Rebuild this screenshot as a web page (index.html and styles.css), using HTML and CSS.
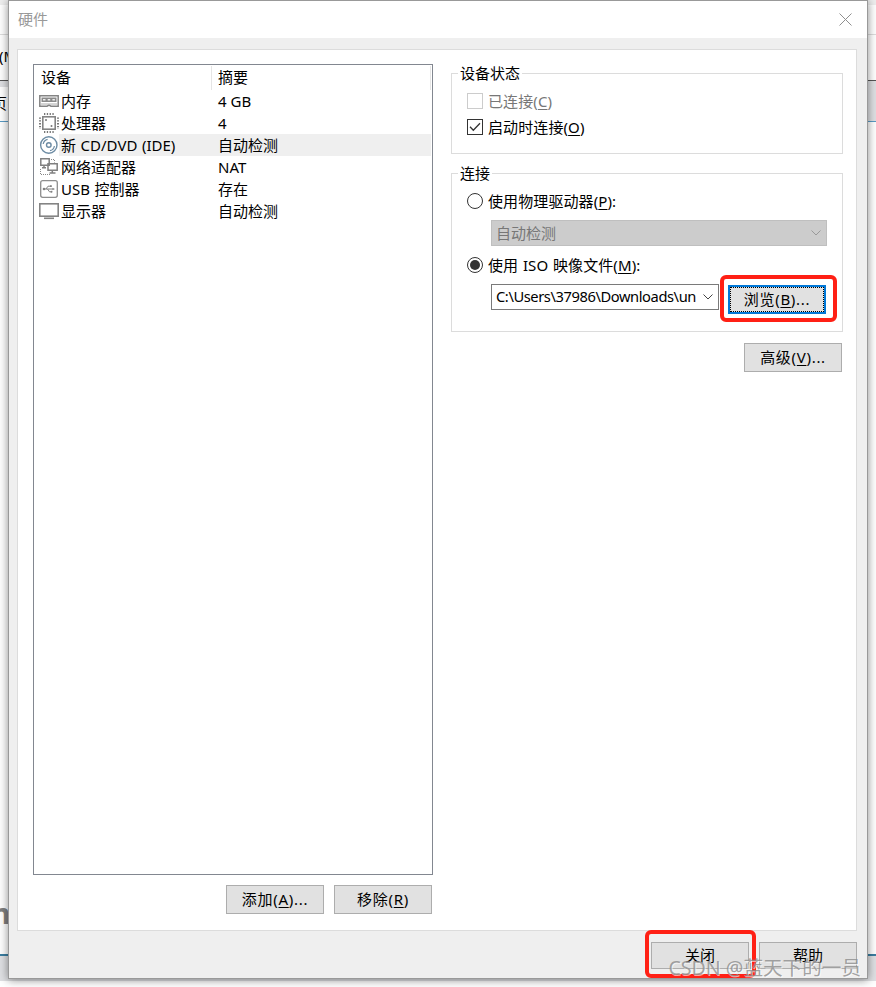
FILE: index.html
```html
<!DOCTYPE html>
<html lang="zh-CN">

<head>
  <meta charset="UTF-8">
  <meta name="viewport" content="width=device-width, initial-scale=1.0">
  <title>硬件</title>
  <link rel="stylesheet" href="styles.css">
</head>

<body>
  <!-- parent window behind the dialog -->
  <div class="parent-window">
    <div class="parent-title"></div>
    <div class="parent-menu">(M)</div>
    <div class="parent-tabs"><span class="parent-tab">页</span></div>
    <div class="parent-content"><span class="parent-logo">m</span></div>
    <div class="parent-status"></div>
  </div>

  <div class="dialog">
    <div class="titlebar">
      <span class="title">硬件</span>
      <svg class="close-icon" width="13" height="13" viewBox="0 0 13 13">
        <path d="M0.5 0.5 L12.5 12.5 M12.5 0.5 L0.5 12.5" stroke="#8f8f8f" fill="none"/>
      </svg>
    </div>

    <div class="panel">
      <div class="left">
        <div class="device-list">
          <div class="list-header">
            <div class="col-device">设备</div>
            <div class="col-summary">摘要</div>
          </div>
          <div class="device">
            <svg class="icon" width="20" height="22" viewBox="0 0 20 22">
              <path d="M0.8 5.8 H19.2 V16.2 H12 L10 15 L8 16.2 H0.8 Z" fill="#fff" stroke="#848484" stroke-width="1.5"/>
              <path d="M2.5 7.5 H17.5 V12 H2.5 Z" fill="#8a8a8a"/>
              <path d="M4 9 H6.5 V10.5 H4 Z M8.7 9 H11.2 V10.5 H8.7 Z M13.4 9 H15.9 V10.5 H13.4 Z" fill="#eee"/>
              <path d="M2 14 H18" stroke="#aaa"/>
            </svg>
            <span class="device-name">内存</span>
            <span class="device-value">4 GB</span>
          </div>
          <div class="device">
            <svg class="icon" width="20" height="22" viewBox="0 0 20 22">
              <path d="M5 2 H16 M5 20 H16" stroke="#777" stroke-width="2" stroke-dasharray="1.3 1.5" fill="none"/>
              <path d="M1 5.5 V17 M19 5.5 V17" stroke="#777" stroke-width="2" stroke-dasharray="1.3 1.5" fill="none"/>
              <rect x="3.8" y="4.8" width="12.4" height="12.4" fill="#fff" stroke="#848484" stroke-width="1.6"/>
              <circle cx="7" cy="8" r="1" fill="#777"/>
              <circle cx="12.5" cy="14" r="1" fill="#777"/>
            </svg>
            <span class="device-name">处理器</span>
            <span class="device-value">4</span>
          </div>
          <div class="device selected">
            <svg class="icon" width="20" height="22" viewBox="0 0 20 22">
              <circle cx="9.8" cy="11" r="8.2" fill="#fff" stroke="#6c8ba3" stroke-width="1.4"/>
              <circle cx="9.8" cy="11" r="2.3" fill="none" stroke="#6c8ba3" stroke-width="1.4"/>
              <path d="M4.2 10 A5.8 5.8 0 0 1 8.6 5.3 M15.4 12 A5.8 5.8 0 0 1 11 16.7" fill="none" stroke="#6c8ba3" stroke-width="1.2"/>
            </svg>
            <span class="device-name">新 CD/DVD (IDE)</span>
            <span class="device-value">自动检测</span>
          </div>
          <div class="device">
            <svg class="icon" width="20" height="22" viewBox="0 0 20 22">
              <path d="M1.8 2.8 H10.2 V9.2 H1.8 Z M9 7.8 H18.2 V14.2 H9 Z" fill="#fff" stroke="#808080" stroke-width="1.5"/>
              <path d="M3 11.8 H7 M5 9 V12 M10.5 17 H16.5 M13.3 14 V17" fill="none" stroke="#808080" stroke-width="1.5"/>
              <path d="M12 3.5 H15.5 V6.5 M1.5 13 V18.5 H11" fill="none" stroke="#888" stroke-dasharray="1 1"/>
            </svg>
            <span class="device-name">网络适配器</span>
            <span class="device-value">NAT</span>
          </div>
          <div class="device">
            <svg class="icon" width="20" height="22" viewBox="0 0 20 22">
              <rect x="1.7" y="2.7" width="16.6" height="16.6" rx="2" fill="#fff" stroke="#8d8d8d" stroke-width="1.3"/>
              <path d="M5 11 H14 M7 11 L9 8.2 H11.5 M8.5 11 L10.5 13.8 H12.5" fill="none" stroke="#808080" stroke-width="1"/>
              <circle cx="5" cy="11" r="1.3" fill="#808080"/>
              <path d="M13.5 9.7 L16 11 L13.5 12.3 Z M11 7.3 H12.8 V9.1 H11 Z" fill="#808080"/>
              <circle cx="12.5" cy="13.8" r="1" fill="#808080"/>
            </svg>
            <span class="device-name">USB 控制器</span>
            <span class="device-value">存在</span>
          </div>
          <div class="device">
            <svg class="icon" width="20" height="22" viewBox="0 0 20 22">
              <rect x="0.8" y="3.8" width="18.4" height="12.4" fill="#fff" stroke="#848484" stroke-width="1.6"/>
              <path d="M5 18.3 H15" stroke="#848484" stroke-width="1.6"/>
            </svg>
            <span class="device-name">显示器</span>
            <span class="device-value">自动检测</span>
          </div>
        </div>
        <div class="list-buttons">
          <button type="button">添加(<u>A</u>)...</button>
          <button type="button">移除(<u>R</u>)</button>
        </div>
      </div>

      <div class="right">
        <div class="group status-group">
          <div class="group-title">设备状态</div>
          <label class="option disabled">
            <span class="checkbox"></span>
            <span class="option-text">已连接(<u>C</u>)</span>
          </label>
          <label class="option">
            <span class="checkbox">
              <svg width="14" height="14" viewBox="0 0 14 14"><path d="M2 6.8 L5.3 10.2 L12 3.2" fill="none" stroke="#333" stroke-width="1.3"/></svg>
            </span>
            <span class="option-text">启动时连接(<u>O</u>)</span>
          </label>
        </div>

        <div class="group connect-group">
          <div class="group-title">连接</div>
          <label class="option">
            <span class="radio"></span>
            <span class="option-text">使用物理驱动器(<u>P</u>):</span>
          </label>
          <div class="combo combo-disabled">
            <span>自动检测</span>
            <svg width="10" height="6" viewBox="0 0 10 6"><path d="M0.5 0.5 L5 5 L9.5 0.5" fill="none" stroke="#999"/></svg>
          </div>
          <label class="option">
            <span class="radio checked"></span>
            <span class="option-text">使用 ISO 映像文件(<u>M</u>):</span>
          </label>
          <div class="file-row">
            <div class="combo combo-file">
              <span class="file-path">C:\Users\37986\Downloads\un</span>
              <svg width="10" height="6" viewBox="0 0 10 6"><path d="M0.5 0.5 L5 5 L9.5 0.5" fill="none" stroke="#444"/></svg>
            </div>
            <div class="mark mark-browse">
              <button type="button" class="focused">浏览(<u>B</u>)...</button>
            </div>
          </div>
        </div>

        <button type="button" class="advanced">高级(<u>V</u>)...</button>
      </div>
    </div>

    <div class="footer">
      <div class="mark mark-close"><button type="button">关闭</button></div>
      <button type="button">帮助</button>
    </div>
  </div>

  <div class="watermark">CSDN @蓝天下的一员</div>
</body>

</html>
```
FILE: styles.css
```css
* {
  box-sizing: border-box;
}

body {
  margin: 0;
  height: 987px;
  overflow: hidden;
  position: relative;
  background: #fff;
  font-family: "Noto Sans", "Noto Sans CJK SC", sans-serif;
  font-size: 15px;
  line-height: 22px;
  color: #000;
}

u {
  text-decoration-thickness: 1px;
  text-underline-offset: 2px;
}

/* parent window */
.parent-window {
  height: 981px;
  display: flex;
  flex-direction: column;
  background: #fff;
}

.parent-title {
  height: 35px;
  border-top: 5px solid #eee;
  border-bottom: 1px solid #ddd;
}

.parent-menu {
  height: 46px;
  line-height: 42px;
  text-indent: -1px;
  border-bottom: 1px solid #555;
}

.parent-tabs {
  height: 41px;
  padding-top: 6px;
  background: #dfe0e3;
  border-bottom: 1px solid #5a9bc4;
}

.parent-tab {
  display: block;
  width: 20px;
  height: 34px;
  line-height: 32px;
  background: #fff;
  text-indent: -8px;
}

.parent-content {
  flex: 1;
  display: flex;
  align-items: flex-end;
  padding-bottom: 22px;
}

.parent-logo {
  font-size: 29px;
  line-height: 38px;
  font-weight: bold;
  color: #808080;
  margin-left: -18px;
}

.parent-status {
  height: 27px;
  background: #dfe0e3;
  border-top: 2px solid #3b7ea1;
}

/* dialog */
.dialog {
  position: absolute;
  left: 8px;
  top: 0;
  width: 860px;
  height: 979px;
  display: flex;
  flex-direction: column;
  background: #efefef;
  border: 1px solid #999;
  box-shadow: 0 1px 9px rgba(0, 0, 0, 0.45);
}

.titlebar {
  height: 37px;
  padding: 0 15px 0 9px;
  display: flex;
  align-items: center;
  justify-content: space-between;
  background: #fff;
  color: #999;
}

.title {
  padding-bottom: 2px;
}

.panel {
  height: 882px;
  margin: 11px 10px 0 8px;
  padding: 14px 13px 0 15px;
  display: flex;
  gap: 18px;
  background: #fff;
  border: 1px solid #dcdcdc;
}

.left {
  width: 400px;
}

.device-list {
  height: 811px;
  padding: 1px;
  border: 1px solid #828790;
}

.list-header {
  height: 24px;
  display: flex;
  line-height: 23px;
  border-right: 1px solid #e5e5e5;
}

.col-device {
  width: 177px;
  padding-left: 6px;
  border-right: 1px solid #e5e5e5;
}

.col-summary {
  padding-left: 6px;
}

.device {
  height: 22px;
  display: flex;
  padding-left: 4px;
}

.device-name {
  width: 153px;
  padding-left: 2px;
  word-spacing: 0.7px;
}

.device-value {
  flex: 1;
  padding-left: 6px;
}

.selected .device-name,
.selected .device-value {
  background: #efefef;
}

.list-buttons {
  display: flex;
  justify-content: flex-end;
  gap: 10px;
  margin-top: 10px;
  padding-right: 1px;
}

button {
  width: 98px;
  height: 29px;
  padding: 0 0 2px;
  font: inherit;
  letter-spacing: 0.7px;
  color: #000;
  background: #e1e1e1;
  border: 1px solid #adadad;
  border-radius: 0;
}

.right {
  flex: 1;
  display: flex;
  flex-direction: column;
}

.group {
  border: 1px solid #dcdcdc;
  padding-left: 15px;
}

.group-title {
  width: fit-content;
  height: 22px;
  margin: -12px 0 0 -9px;
  padding: 0 2px;
  background: #fff;
}

.status-group {
  height: 81px;
  margin-top: 9px;
}

.connect-group {
  height: 159px;
  margin-top: 19px;
}

.option {
  height: 26px;
  display: flex;
  align-items: center;
  white-space: nowrap;
}

.option-text {
  letter-spacing: 0.1px;
  word-spacing: 0.7px;
}

.status-group .group-title {
  margin-bottom: 4px;
}

.connect-group .group-title {
  margin-bottom: 4px;
}

.disabled {
  color: #777;
}

.checkbox,
.radio {
  width: 16px;
  height: 16px;
  margin-right: 5px;
  border: 1px solid #333;
  background: #fff;
}

.checkbox svg {
  display: block;
}

.disabled .checkbox {
  border-color: #ccc;
}

.radio {
  border-radius: 50%;
}

.radio.checked {
  padding: 2px;
  background: #333 content-box;
}

.combo {
  height: 26px;
  margin-left: 24px;
  padding: 0 5px 0 4px;
  display: flex;
  align-items: center;
  justify-content: space-between;
  border: 1px solid #7a7a7a;
}

.combo svg {
  flex-shrink: 0;
}

.combo-disabled {
  width: 336px;
  margin-top: 6px;
  margin-bottom: 6px;
  color: #777;
  background: #ccc;
  border-color: #bfbfbf;
}

.file-row {
  display: flex;
  align-items: flex-start;
}

.combo-file {
  width: 228px;
  margin-top: 6px;
  white-space: nowrap;
}

.file-path {
  padding-bottom: 2px;
  font-size: 14.7px;
  letter-spacing: -0.42px;
}

.mark {
  border: 4px solid #ff2015;
  border-radius: 6px;
}

.mark-browse {
  width: 117px;
  height: 47px;
  margin-top: -3px;
  margin-left: 1px;
  padding: 6px 0 0 4px;
}

.mark-browse button {
  display: block;
}

.focused {
  border: 2px solid #0078d7;
  outline: 1px dotted #000;
  outline-offset: -3px;
}

.advanced {
  align-self: flex-end;
  margin: 11px 1px 0 0;
}

.footer {
  display: flex;
  justify-content: flex-end;
  padding-right: 10px;
}

.footer button {
  height: 27px;
  margin-top: 11px;
  letter-spacing: 0;
}

.mark-close {
  width: 111px;
  height: 48px;
  margin-top: -1px;
  margin-right: 3px;
}

.footer .mark-close button {
  display: block;
  margin: 8px 0 0 2px;
}

.watermark {
  position: absolute;
  right: 15px;
  bottom: 6px;
  font-size: 19.6px;
  line-height: 26px;
  color: rgba(140, 140, 140, 0.8);
  text-shadow: 1px 1px 0 rgba(255, 255, 255, 0.6);
}
```
